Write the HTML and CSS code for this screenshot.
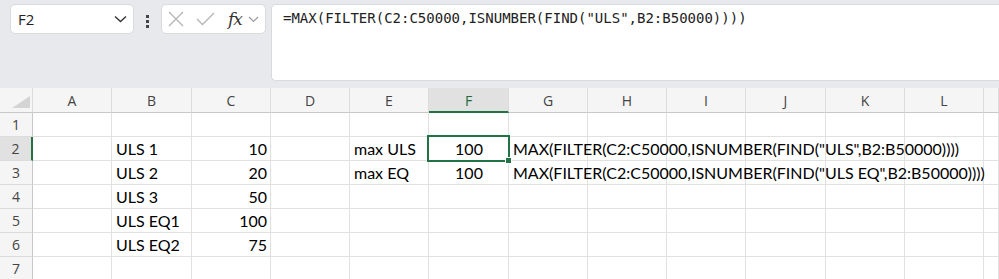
FILE: index.html
```html
<!DOCTYPE html>
<html lang="en">
<head>
    <meta charset="UTF-8">
    <meta name="viewport" content="width=device-width, initial-scale=1.0">
    <title>Book1 - Excel</title>
    <link rel="stylesheet" href="styles.css">
</head>
<body>
    <div class="toolbar">
        <div class="namebox">
            <span>F2</span>
            <svg class="chev" width="13" height="8" viewBox="0 0 13 8"><path d="M1 1.5 L6.5 6.5 L12 1.5" fill="none" stroke="#333" stroke-width="1.4"/></svg>
        </div>
        <div class="kebab"><i></i><i></i><i></i></div>
        <div class="fxbox">
            <svg width="16" height="16" viewBox="0 0 16 16"><path d="M1 1 L15 15 M15 1 L1 15" stroke="#b4b4b4" stroke-width="1.3"/></svg>
            <svg width="19" height="14" viewBox="0 0 19 14"><path d="M1 7 L6.5 12.5 L18 1" fill="none" stroke="#b4b4b4" stroke-width="1.3"/></svg>
            <span class="fx">fx</span>
            <svg width="11" height="7" viewBox="0 0 11 7"><path d="M1 1 L5.5 5.5 L10 1" fill="none" stroke="#999" stroke-width="1.2"/></svg>
        </div>
        <div class="formula">=MAX(FILTER(C2:C50000,ISNUMBER(FIND("ULS",B2:B50000))))</div>
    </div>

    <div class="sheet">
        <div class="hd corner"><svg width="18" height="12" viewBox="0 0 18 12"><path d="M18 0 L18 12 L0 12 Z" fill="#d4d4d4"/></svg></div>
        <div class="hd">A</div><div class="hd">B</div><div class="hd">C</div><div class="hd">D</div>
        <div class="hd">E</div><div class="hd sel-col">F</div><div class="hd">G</div><div class="hd">H</div>
        <div class="hd">I</div><div class="hd">J</div><div class="hd">K</div><div class="hd">L</div><div class="hd"></div>

        <div class="rh">1</div>
        <div class="c"></div><div class="c"></div><div class="c"></div><div class="c"></div><div class="c"></div><div class="c"></div>
        <div class="c"></div><div class="c"></div><div class="c"></div><div class="c"></div><div class="c"></div><div class="c"></div><div class="c"></div>

        <div class="rh sel-row">2</div>
        <div class="c"></div><div class="c">ULS 1</div><div class="c num">10</div><div class="c"></div><div class="c">max ULS</div>
        <div class="c mid active">100</div>
        <div class="c over">MAX(FILTER(C2:C50000,ISNUMBER(FIND("ULS",B2:B50000))))</div>
        <div class="c"></div><div class="c"></div><div class="c"></div><div class="c"></div><div class="c"></div><div class="c"></div>

        <div class="rh">3</div>
        <div class="c"></div><div class="c">ULS 2</div><div class="c num">20</div><div class="c"></div><div class="c">max EQ</div>
        <div class="c mid">100</div>
        <div class="c over">MAX(FILTER(C2:C50000,ISNUMBER(FIND("ULS EQ",B2:B50000))))</div>
        <div class="c"></div><div class="c"></div><div class="c"></div><div class="c"></div><div class="c"></div><div class="c"></div>

        <div class="rh">4</div>
        <div class="c"></div><div class="c">ULS 3</div><div class="c num">50</div><div class="c"></div><div class="c"></div><div class="c"></div>
        <div class="c"></div><div class="c"></div><div class="c"></div><div class="c"></div><div class="c"></div><div class="c"></div><div class="c"></div>

        <div class="rh">5</div>
        <div class="c"></div><div class="c">ULS EQ1</div><div class="c num">100</div><div class="c"></div><div class="c"></div><div class="c"></div>
        <div class="c"></div><div class="c"></div><div class="c"></div><div class="c"></div><div class="c"></div><div class="c"></div><div class="c"></div>

        <div class="rh">6</div>
        <div class="c"></div><div class="c">ULS EQ2</div><div class="c num">75</div><div class="c"></div><div class="c"></div><div class="c"></div>
        <div class="c"></div><div class="c"></div><div class="c"></div><div class="c"></div><div class="c"></div><div class="c"></div><div class="c"></div>

        <div class="rh">7</div>
        <div class="c"></div><div class="c"></div><div class="c"></div><div class="c"></div><div class="c"></div><div class="c"></div>
        <div class="c"></div><div class="c"></div><div class="c"></div><div class="c"></div><div class="c"></div><div class="c"></div><div class="c"></div>
    </div>
</body>
</html>
```

FILE: styles.css
```css
body {
    margin: 0;
    background: #e7e9ec;
    overflow: hidden;
    font-family: "Open Sans", sans-serif;
}
.toolbar {
    display: flex;
    align-items: flex-start;
    height: 84px;
    padding-top: 4px;
}
.namebox {
    display: flex;
    align-items: center;
    justify-content: space-between;
    box-sizing: border-box;
    width: 124px;
    height: 30px;
    margin-left: 10px;
    padding: 0 6px 0 7px;
    background: #fff;
    border: 1px solid #d9dadc;
    border-radius: 5px;
    font-size: 15px;
    color: #222;
}
.kebab {
    display: flex;
    flex-direction: column;
    gap: 2px;
    width: 27px;
    align-items: center;
    padding-top: 11px;
}
.kebab i {
    width: 3px;
    height: 3px;
    background: #444;
}
.fxbox {
    display: flex;
    align-items: center;
    box-sizing: border-box;
    width: 105px;
    height: 30px;
    padding-left: 6px;
    background: #fff;
    border: 1px solid #d9dadc;
    border-radius: 5px;
}
.fxbox svg:nth-child(2) {
    margin-left: 12px;
}
.fx {
    margin-left: 13px;
    margin-right: 6px;
    font-family: "DejaVu Serif", serif;
    font-style: italic;
    font-size: 17px;
    color: #333;
    letter-spacing: -1px;
}
.formula {
    flex: 1;
    box-sizing: border-box;
    height: 77px;
    margin-left: 5px;
    padding: 5px 11px;
    background: #fff;
    border: 1px solid #d9dadc;
    border-right: none;
    border-radius: 5px 0 0 5px;
    font-family: "DejaVu Sans Mono", monospace;
    font-size: 14px;
    color: #222;
}
.sheet {
    display: grid;
    grid-template-columns: 33px 79px 80px 79px 79px 79px 80px 79px 79px 79px 80px 79px 79px 15px;
    grid-template-rows: 25px repeat(7, 24px);
    background: #fff;
}
.sheet > div {
    box-sizing: border-box;
    border-right: 1px solid #e1e1e1;
    border-bottom: 1px solid #e1e1e1;
    white-space: nowrap;
}
.hd {
    background: #f5f5f5;
    border-bottom-color: #c8c8c8 !important;
    border-right-color: #dcdcdc !important;
    text-align: center;
    font-size: 14px;
    line-height: 25px;
    color: #444;
}
.corner {
    display: flex;
    align-items: flex-end;
    justify-content: flex-end;
    padding: 0 2px 4px 0;
}
.rh {
    background: #f5f5f5;
    border-right-color: #c8c8c8 !important;
    border-bottom-color: #dcdcdc !important;
    text-align: center;
    font-size: 14px;
    line-height: 23px;
    color: #444;
}
.sel-col {
    background: #e1e1e1;
    border-bottom: 2px solid #217346 !important;
    color: #1c6b3d;
}
.sel-row {
    background: #e1e1e1;
    border-right: 2px solid #217346 !important;
}
.c {
    padding: 0 3px 0 4px;
    font-family: Lato, "Open Sans", sans-serif;
    font-size: 16px;
    line-height: 23px;
    color: #000;
}
.num {
    text-align: right;
}
.mid {
    text-align: center;
}
.over {
    overflow: visible;
    position: relative;
    z-index: 1;
}
.active {
    position: relative;
}
.active::before {
    content: "";
    position: absolute;
    left: -2px;
    top: -2px;
    right: -2px;
    bottom: -2px;
    border: 2px solid #217346;
}
.active::after {
    content: "";
    position: absolute;
    right: -4px;
    bottom: -4px;
    width: 5px;
    height: 5px;
    background: #217346;
    border: 1px solid #fff;
    z-index: 2;
}
```
